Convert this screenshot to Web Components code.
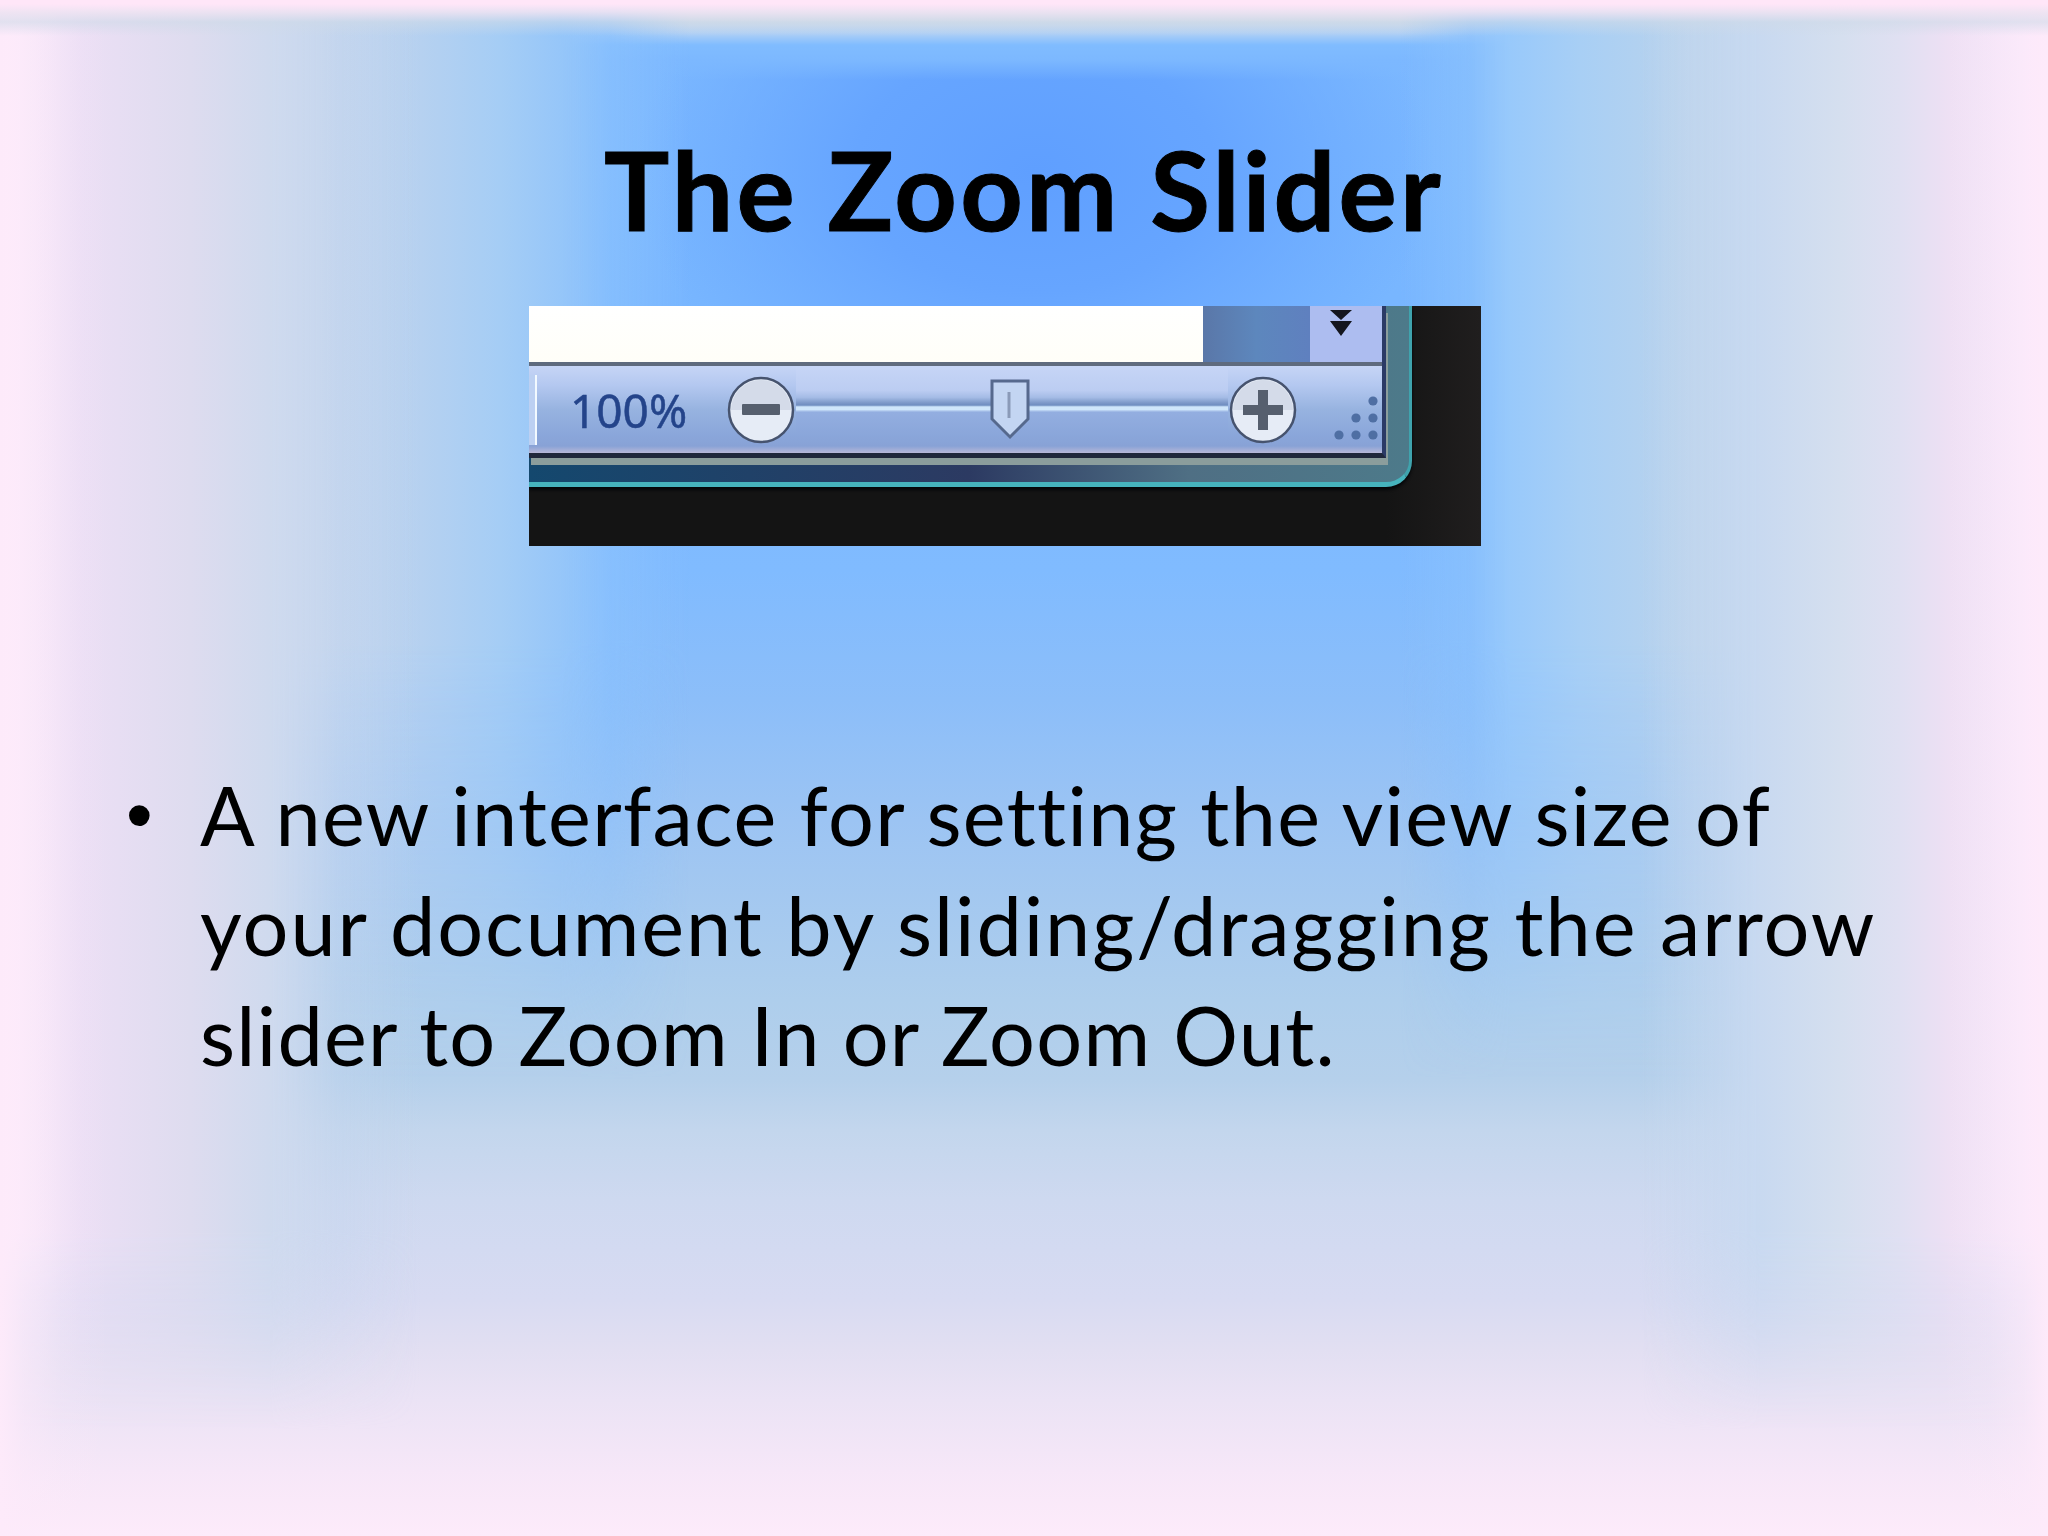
<!DOCTYPE html>
<html lang="en">
<head>
<meta charset="utf-8">
<title>The Zoom Slider</title>
<style>
html, body { margin: 0; padding: 0; background: #fdeafa; }
</style>
</head>
<body>
<slide-page>
    <slide-title>The Zoom Slider</slide-title>
    <zoom-shot></zoom-shot>
    <bullet-item>
        <span style="display:block;letter-spacing:1.34px">A new interface for setting the view size of</span>
        <span style="display:block;letter-spacing:1.94px">your document by sliding/dragging the arrow</span>
        <span style="display:block;letter-spacing:1.27px">slider to Zoom In or Zoom Out.</span>
    </bullet-item>
</slide-page>

<script>
class slidePage extends HTMLElement {
    constructor() {
        super();
        this.attachShadow({ mode: "open" });
        this.shadowRoot.innerHTML = `
            <style>
                :host {
                    display: flex;
                    flex-direction: column;
                    position: relative;
                    width: 2048px;
                    height: 1536px;
                    overflow: hidden;
                    box-sizing: border-box;
                    color: #000;
                    font-family: Lato, "Liberation Sans", sans-serif;
                    font-variant-ligatures: none;
                    background:
                        linear-gradient(to bottom, #cfdae8 20px, #b0d0f5 33px, #80bcff 45px, #7cb8ff 60px, rgba(124,184,255,0) 80px),
                        radial-gradient(ellipse 400px 270px at 1035px 170px, #5f9fff 0%, #66a5ff 45%, rgba(112,174,255,0) 100%),
                        linear-gradient(to bottom,
                            #7cb8ff 0, #78b6ff 300px, #80bbff 570px, #8cbef9 700px, #9cc4f3 820px,
                            #aeceec 1000px, #b5d0eb 1080px, #c3d6ed 1130px, #ced9f0 1200px,
                            #d8dbf2 1300px, #e2dff2 1350px, #ebe3f5 1400px, #f6e7f8 1470px, #fdebfa 1536px);
                }
                /* wide blue-grey fade on the sides, upper part only */
                .wide {
                    position: absolute;
                    inset: 0;
                    background: linear-gradient(to right,
                        #c5d6ee 0, #c5d6ee 320px, #b6d1f0 420px, #a5cdf5 500px, #96c6f9 560px, rgba(138,193,253,.7) 610px, rgba(130,189,255,0) 690px,
                        rgba(130,189,255,0) 1400px, rgba(138,193,253,.7) 1470px, #98c9fb 1510px, #a8cff5 1580px, #bad3ec 1690px, #bad3ec 2048px);
                    -webkit-mask-image: linear-gradient(to bottom, #000 0, #000 640px, transparent 1080px);
                    mask-image: linear-gradient(to bottom, #000 0, #000 640px, transparent 1080px);
                }
                /* pale band near the edges, fades out low on the page */
                .mid {
                    position: absolute;
                    inset: 0;
                    background: linear-gradient(to right,
                        #ffeefc 0, #ecdff5 80px, #dedcef 190px, #cfdaee 270px, rgba(197,214,238,.4) 340px, rgba(197,214,238,0) 420px,
                        rgba(186,211,236,0) 1640px, rgba(200,217,240,.5) 1700px, #c8d9f0 1760px, #d5dfef 1840px, #e0e0f2 1900px, #eee0f4 1950px, #f8e8fa 2020px, #ffe9fb 2048px);
                    -webkit-mask-image: linear-gradient(to bottom, #000 0, #000 1230px, transparent 1430px);
                    mask-image: linear-gradient(to bottom, #000 0, #000 1230px, transparent 1430px);
                }
                /* pink edges, all the way down */
                .edge {
                    position: absolute;
                    inset: 0;
                    background: linear-gradient(to right,
                        #fdeafa 0, rgba(253,234,250,.5) 24px, rgba(253,234,250,.15) 60px, rgba(253,234,250,0) 110px,
                        rgba(253,234,250,0) 1940px, rgba(253,234,250,.15) 1990px, rgba(253,234,250,.5) 2024px, #fdeafa 2048px);
                }
                .top {
                    position: absolute;
                    inset: 0;
                    background: linear-gradient(to bottom,
                        #ffe6f8 0, #ffe6f8 4px, rgba(238,227,242,.9) 12px, rgba(207,218,232,.6) 22px, rgba(207,218,232,0) 36px);
                }
                .content {
                    position: relative;
                    display: flex;
                    flex-direction: column;
                    height: 100%;
                }
            </style>
            <div class="wide"></div>
            <div class="mid"></div>
            <div class="edge"></div>
            <div class="top"></div>
            <div class="content"><slot></slot></div>
        `;
    }
}

class slideTitle extends HTMLElement {
    constructor() {
        super();
        this.attachShadow({ mode: "open" });
        this.shadowRoot.innerHTML = `
            <style>
                :host {
                    display: block;
                    padding-top: 124px;
                    height: 182px;
                    text-align: center;
                    font-size: 109px;
                    line-height: 130px;
                    font-weight: 700;
                    letter-spacing: 3.2px;
                    -webkit-text-stroke: 1px #000;
                    color: #000;
                }
            </style>
            <slot></slot>
        `;
    }
}

class zoomShot extends HTMLElement {
    constructor() {
        super();
        this.attachShadow({ mode: "open" });
        this.shadowRoot.innerHTML = `
            <style>
                :host {
                    display: block;
                    width: 952px;
                    height: 240px;
                    margin-left: 529px;
                    background: linear-gradient(to right, #141414 0, #141414 90%, #201e1e 100%);
                    overflow: hidden;
                }
                .window {
                    width: 883px;
                    height: 181px;
                    box-sizing: border-box;
                    display: flex;
                    background: linear-gradient(to right, #14486e 0, #2c3a62 50%, #4f6f84 75%, #4d7a8a 100%);
                    border-right: 3px solid #3fa3ad;
                    border-bottom: 5px solid #46b3bd;
                    border-bottom-right-radius: 26px;
                    box-shadow: 0 3px 3px #05070a;
                }
                .inner {
                    width: 857px;
                    height: 152px;
                    display: flex;
                    flex-direction: column;
                    box-sizing: border-box;
                    border-right: 4px solid #2b3a66;
                    border-bottom: 5px solid #20283c;
                    box-shadow: 2px 7px 0 #8b9d9c;
                }
                .top {
                    display: flex;
                    height: 56px;
                    flex: none;
                    border-bottom: 4px solid #5f6b7e;
                }
                .page { flex: 1; background: linear-gradient(#fff, #fffef8); }
                .gutter { width: 107px; background: linear-gradient(to right, #5a77a8, #5d87bd 50%, #5f80bf); }
                .more {
                    width: 72px;
                    box-sizing: border-box;
                    padding-right: 10px;
                    display: flex;
                    justify-content: center;
                    background: #adbdf0;
                }
                .more svg { width: 24px; height: 34px; filter: blur(.5px); }
                .status {
                    flex: 1;
                    display: flex;
                    align-items: center;
                    background: linear-gradient(to bottom, #c6d5f6 0, #b4c8f0 22%, #97b3e0 50%, #8aa6da 80%, #88a2d6 92%, #b8b8d8 100%);
                }
                .tab {
                    width: 8px;
                    height: 70px;
                    box-sizing: border-box;
                    border-right: 2px solid #f2f9ff;
                    background: #bcd0f2;
                }
                .zoom-value {
                    margin-left: 33px;
                    width: 155px;
                    font: 46px/1 "Noto Sans", sans-serif;
                    color: #24448a;
                    -webkit-text-stroke: .5px #24448a;
                    filter: blur(.7px);
                }
                .round { width: 72px; height: 72px; flex: none; filter: blur(.7px); }
                .track {
                    flex: 1;
                    align-self: stretch;
                    position: relative;
                    margin: 0 -1px;
                    background: linear-gradient(to bottom,
                        #c6d5f6 0, #bccdf2 28%, #a5bce6 36%, #7f9aca 42%, #6f8dc0 45%, #cfe6fb 47%, #cfe6fb 50%,
                        #93aee0 53%, #8aa6da 80%, #88a2d6 92%, #b8b8d8 100%);
                }
                .thumb {
                    position: absolute;
                    left: 192px;
                    top: 12px;
                    width: 44px;
                    height: 62px;
                    filter: blur(.6px);
                }
                .grip { width: 72px; height: 72px; margin-left: 11px; filter: blur(.6px); }
            </style>
            <div class="window">
                <div class="inner">
                    <div class="top">
                        <div class="page"></div>
                        <div class="gutter"></div>
                        <div class="more">
                            <svg viewBox="0 0 24 34">
                                <path d="M1 4h22l-11 10zM1 15h22l-11 15z" fill="#14161e"/>
                            </svg>
                        </div>
                    </div>
                    <div class="status">
                        <div class="tab"></div>
                        <div class="zoom-value">100%</div>
                        <svg class="round" viewBox="0 0 72 72">
                            <circle cx="36" cy="36" r="32" fill="#e6ecf6" stroke="#46536e" stroke-width="2.5"/>
                            <path d="M6 36a30 30 0 0 1 60 0z" fill="#c4cede" opacity=".55"/>
                            <rect x="17" y="30" width="38" height="11" rx="1" fill="#565f6e"/>
                        </svg>
                        <div class="track">
                            <svg class="thumb" viewBox="0 0 44 62">
                                <path d="M4 3h36v38L22 59 4 41z" fill="#c3d5f2" stroke="#56698d" stroke-width="3"/>
                                <path d="M21 14v26" stroke="#8a9ab8" stroke-width="3"/>
                            </svg>
                        </div>
                        <svg class="round" viewBox="0 0 72 72">
                            <circle cx="36" cy="36" r="32" fill="#e6ecf6" stroke="#46536e" stroke-width="2.5"/>
                            <path d="M6 36a30 30 0 0 1 60 0z" fill="#c4cede" opacity=".55"/>
                            <path d="M31 16h10v15h15v10H41v15H31V41H16V31h15z" fill="#565f6e"/>
                        </svg>
                        <svg class="grip" viewBox="0 0 72 72">
                            <g fill="#4f6fa3">
                                <circle cx="63" cy="27" r="4.6"/>
                                <circle cx="46" cy="44" r="4.6"/><circle cx="63" cy="44" r="4.6"/>
                                <circle cx="29" cy="61" r="4.6"/><circle cx="46" cy="61" r="4.6"/><circle cx="63" cy="61" r="4.6"/>
                            </g>
                        </svg>
                    </div>
                </div>
            </div>
        `;
    }
}

class bulletItem extends HTMLElement {
    constructor() {
        super();
        this.attachShadow({ mode: "open" });
        this.shadowRoot.innerHTML = `
            <style>
                :host {
                    display: grid;
                    grid-template-columns: 73px 1690px;
                    margin: 214px 0 0 127px;
                    font-size: 81px;
                    line-height: 110px;
                    color: #000;
                }
                .mark { font-family: "Liberation Sans", sans-serif; font-size: 76px; margin-left: -1px; }
            </style>
            <div class="mark">•</div>
            <div><slot></slot></div>
        `;
    }
}

customElements.define("slide-page", slidePage);
customElements.define("slide-title", slideTitle);
customElements.define("zoom-shot", zoomShot);
customElements.define("bullet-item", bulletItem);
</script>
</body>
</html>
